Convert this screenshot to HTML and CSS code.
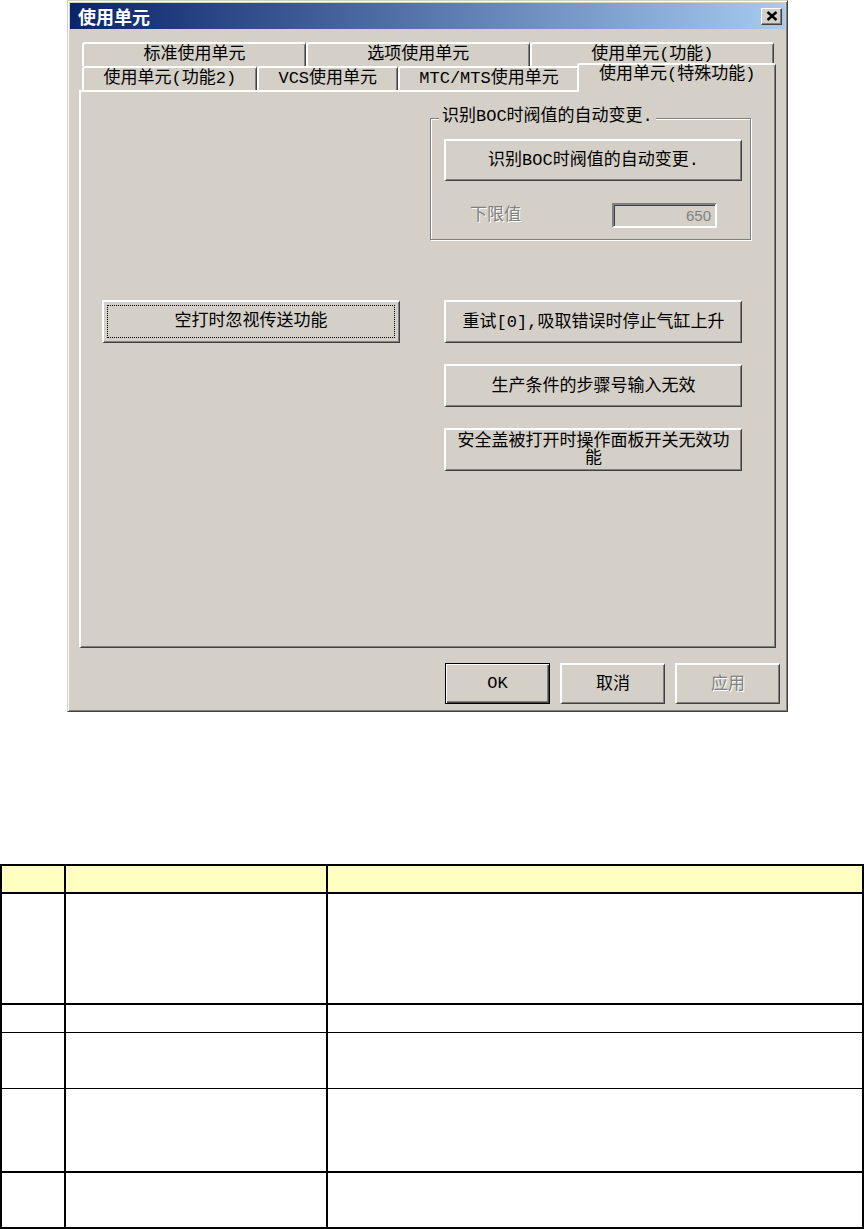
FILE: index.html
```html
<!DOCTYPE html>
<html lang="zh-CN">

<head>
    <meta charset="UTF-8">
    <title>使用单元</title>
    <link rel="stylesheet" href="styles.css">
</head>

<body>

    <div class="dialog">
        <div class="titlebar">
            <span class="title">使用单元</span>
            <span class="close-btn">
                <svg width="12" height="10" viewBox="0 0 12 10">
                    <path d="M1.5 1 L10.5 9 M10.5 1 L1.5 9" stroke="#000" stroke-width="2.4" fill="none"/>
                </svg>
            </span>
        </div>

        <div class="tabs">
            <div class="tab-row">
                <div class="tab">标准使用单元</div>
                <div class="tab">选项使用单元</div>
                <div class="tab">使用单元(功能)</div>
            </div>
            <div class="tab-row">
                <div class="tab">使用单元(功能2)</div>
                <div class="tab">VCS使用单元</div>
                <div class="tab">MTC/MTS使用单元</div>
                <div class="tab tab-active">使用单元(特殊功能)</div>
            </div>
        </div>

        <div class="panel">
            <div class="group">
                <span class="group-caption">识别BOC时阀值的自动变更.</span>
                <button class="btn btn-group">识别BOC时阀值的自动变更.</button>
                <div class="field-row">
                    <label class="label-disabled" for="lowerLimit">下限值</label>
                    <input class="num-input" id="lowerLimit" value="650" disabled>
                </div>
            </div>

            <div class="col-left">
                <button class="btn btn-focus"><span class="focus-ring">空打时忽视传送功能</span></button>
            </div>

            <div class="col-right">
                <button class="btn">重试[0],吸取错误时停止气缸上升</button>
                <button class="btn">生产条件的步骤号输入无效</button>
                <button class="btn">安全盖被打开时操作面板开关无效功能</button>
            </div>
        </div>

        <div class="footer">
            <button class="btn btn-small btn-default">OK</button>
            <button class="btn btn-small">取消</button>
            <button class="btn btn-small btn-disabled">应用</button>
        </div>
    </div>

    <div class="sheet">
        <div class="sheet-row row-head">
            <div class="cell"></div>
            <div class="cell"></div>
            <div class="cell"></div>
        </div>
        <div class="sheet-row row-1">
            <div class="cell"></div>
            <div class="cell"></div>
            <div class="cell"></div>
        </div>
        <div class="sheet-row row-2">
            <div class="cell"></div>
            <div class="cell"></div>
            <div class="cell"></div>
        </div>
        <div class="sheet-row row-3">
            <div class="cell"></div>
            <div class="cell"></div>
            <div class="cell"></div>
        </div>
        <div class="sheet-row row-4">
            <div class="cell"></div>
            <div class="cell"></div>
            <div class="cell"></div>
        </div>
        <div class="sheet-row row-5">
            <div class="cell"></div>
            <div class="cell"></div>
            <div class="cell"></div>
        </div>
    </div>

</body>

</html>
```

FILE: styles.css
```css
body {
    margin: 0;
    padding: 0;
    background-color: #fff;
    font-family: "Liberation Mono", "Noto Sans CJK SC", monospace;
    font-size: 17px;
    color: #000;
}

/* dialog window */
.dialog {
    box-sizing: border-box;
    width: 721px;
    margin-left: 67px;
    padding: 2px;
    background-color: #d4d0c8;
    border: 1px solid;
    border-color: #d4d0c8 #404040 #404040 #d4d0c8;
    box-shadow: inset 1px 1px #fff, inset -1px -1px #808080;
}

.titlebar {
    display: flex;
    align-items: center;
    height: 26px;
    padding: 0 3px 0 8px;
    background: linear-gradient(to right, #0a246a, #a6caf0);
}

.title {
    font-family: "Noto Sans CJK SC", sans-serif;
    font-weight: bold;
    font-size: 18px;
    line-height: 20px;
    color: #fff;
}

.close-btn {
    box-sizing: border-box;
    display: flex;
    align-items: center;
    justify-content: center;
    width: 21px;
    height: 17px;
    margin-left: auto;
    background-color: #d4d0c8;
    border-style: solid;
    border-width: 1px;
    border-color: #fff #404040 #404040 #fff;
    box-shadow: inset -1px -1px #808080;
}

/* tabs */
.tabs {
    margin: 13px 9px 0;
}

.tab-row {
    display: flex;
    height: 24px;
    padding: 0 2px 0 3px;
}

.tab {
    flex: 1 1 auto;
    box-sizing: border-box;
    background-color: #d4d0c8;
    border-top: 2px solid #fff;
    border-left: 2px solid #fff;
    border-right: 1px solid #404040;
    border-radius: 3px 3px 0 0;
    box-shadow: inset -1px 0 #808080;
    text-align: center;
    line-height: 22px;
    white-space: nowrap;
}

.tab-active {
    position: relative;
    z-index: 1;
    margin: -3px -2px -2px;
    line-height: 20px;
}

/* page of the active tab */
.panel {
    box-sizing: border-box;
    height: 558px;
    margin: 0 9px;
    padding: 26px 0 0 21px;
    display: grid;
    grid-template-columns: 298px 298px;
    grid-template-rows: auto auto;
    column-gap: 44px;
    row-gap: 60px;
    align-content: start;
    border-style: solid;
    border-width: 2px 1px 1px 2px;
    border-color: #fff #404040 #404040 #fff;
    box-shadow: inset -1px -1px #808080;
}

.group {
    grid-column: 2;
    grid-row: 1;
    margin: 0 -9px 0 -14px;
    padding: 0 8px 11px 13px;
    border: 1px solid #808080;
    box-shadow: inset 1px 1px #fff, 1px 1px #fff;
}

.group-caption {
    display: table;
    margin: -11px 0 0 -5px;
    padding: 0 3px;
    line-height: 18px;
    background-color: #d4d0c8;
}

.field-row {
    display: flex;
    align-items: center;
    justify-content: space-between;
    margin-top: 22px;
    padding: 0 25px 0 26px;
}

.label-disabled {
    color: #808080;
    text-shadow: 1px 1px #fff;
    line-height: 18px;
}

.num-input {
    box-sizing: border-box;
    width: 105px;
    height: 25px;
    padding: 0 4px;
    background-color: #d4d0c8;
    border-style: solid;
    border-width: 2px;
    border-color: #808080 #fff #fff #808080;
    box-shadow: inset 1px 1px #404040;
    font-family: "Liberation Sans", sans-serif;
    font-size: 15px;
    color: #808080;
    text-align: right;
}

.col-left {
    grid-column: 1;
    grid-row: 2;
}

.col-right {
    grid-column: 2;
    grid-row: 2;
    display: flex;
    flex-direction: column;
    gap: 21px;
}

/* buttons */
.btn {
    box-sizing: border-box;
    display: flex;
    align-items: center;
    justify-content: center;
    width: 298px;
    height: 43px;
    margin: 0;
    padding: 0 6px;
    background-color: #d4d0c8;
    border-style: solid;
    border-width: 2px 1px 1px 2px;
    border-color: #fff #404040 #404040 #fff;
    box-shadow: inset -1px -1px #808080;
    font-family: "Liberation Mono", "Noto Sans CJK SC", monospace;
    font-size: 17px;
    line-height: 17px;
    color: #000;
    text-align: center;
}

.btn-group {
    width: 100%;
    height: 42px;
    margin-top: 13px;
}

.btn-focus {
    padding: 3px 4px 4px 3px;
}

.focus-ring {
    flex: 1;
    align-self: stretch;
    display: flex;
    align-items: center;
    justify-content: center;
    border: 1px dotted #000;
}

.footer {
    display: flex;
    justify-content: flex-end;
    gap: 10px;
    padding: 15px 5px 5px 0;
}

.btn-small {
    width: 105px;
    height: 41px;
}

.btn-default {
    border: 1px solid #000;
    box-shadow: inset 1px 1px #fff, inset -1px -1px #404040, inset -2px -2px #808080;
}

.btn-disabled {
    color: #808080;
    text-shadow: 1px 1px #fff;
}

/* empty sheet below the dialog */
.sheet {
    box-sizing: border-box;
    width: 864px;
    margin-top: 152px;
    border: 2px solid #000;
}

.sheet-row {
    box-sizing: border-box;
    display: grid;
    grid-template-columns: 64px 262px 1fr;
}

.cell {
    border-right: 2px solid #000;
}

.cell:last-child {
    border-right: none;
}

.row-head {
    height: 28px;
    background-color: #ffffc0;
    border-bottom: 2px solid #000;
}

.row-1 {
    height: 111px;
    border-bottom: 2px solid #000;
}

.row-2 {
    height: 28px;
    border-bottom: 1px solid #000;
}

.row-3 {
    height: 56px;
    border-bottom: 1px solid #000;
}

.row-4 {
    height: 84px;
    border-bottom: 2px solid #000;
}

.row-5 {
    height: 54px;
}
```
